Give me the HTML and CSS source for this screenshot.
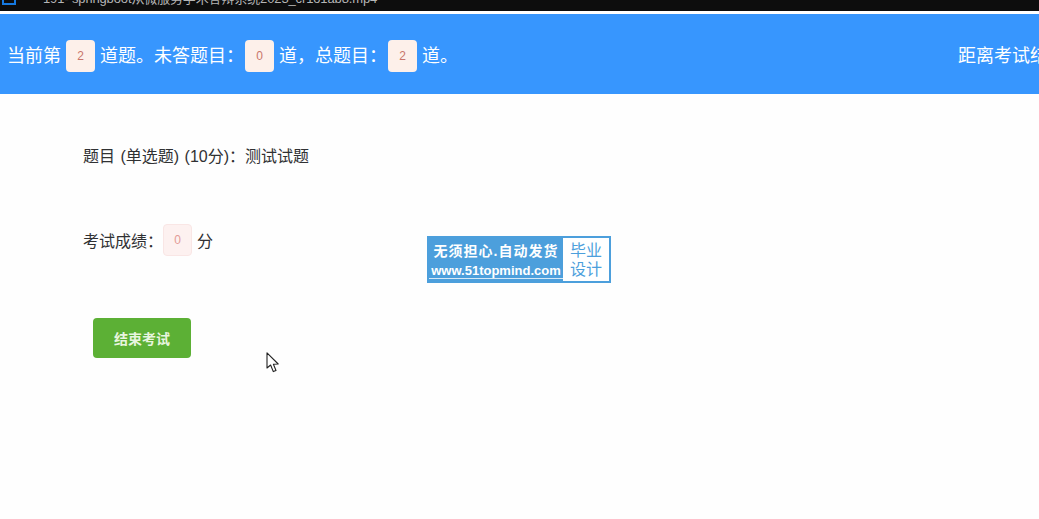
FILE: index.html
```html
<!DOCTYPE html>
<html lang="zh-CN">
<head>
  <meta charset="UTF-8" />
  <title>考试</title>
  <link rel="stylesheet" href="styles.css">
</head>
<body>
  <div class="player-bar">
    <span class="player-icon"></span>
    <span class="player-title">191- springboot从微服务学术答辩系统2023_cr1o1ab8.mp4</span>
  </div>

  <div class="exam-header">
    <div class="exam-count">
      当前第<span class="tag">2</span>道题。未答题目：<span class="tag tag-tight">0</span>道，总题目：<span class="tag tag-tight">2</span>道。
    </div>
    <div class="exam-timer">距离考试结束还有</div>
  </div>

  <div class="exam-body">
    <div class="question">题目 (单选题) (10分)：测试试题</div>
    <div class="score">考试成绩：<span class="tag tag-pale">0</span>分</div>
    <button class="finish-btn">结束考试</button>

    <div class="watermark">
      <div class="watermark-left">
        <div class="watermark-slogan">无须担心.自动发货</div>
        <div class="watermark-url">www.51topmind.com</div>
      </div>
      <div class="watermark-right">毕业<br>设计</div>
    </div>

    <svg class="mouse-cursor" width="14" height="21" viewBox="0 0 14 21">
      <path d="M1 0.8 L1 16 L4.6 13 L7.3 19.6 L10 18.5 L7.4 12.3 L12.2 12 Z" fill="#fff" stroke="#222" stroke-width="1.1" stroke-linejoin="round"/>
    </svg>
  </div>
</body>
</html>
```

FILE: styles.css
```css
/* pagina */
html, body {
  height: 100%;
}

body {
  margin: 0;
  background-color: #fefefe;
  color: #303133;
  font-family: "Liberation Sans", "Noto Sans CJK SC", sans-serif;
  overflow: hidden;
  display: flex;
  flex-direction: column;
}

/* barra do player no topo */
.player-bar {
  height: 11px;
  background-color: #0d0d0d;
  border-bottom: 3px solid #fff;
  position: relative;
  overflow: hidden;
  flex-shrink: 0;
}

.player-icon {
  position: absolute;
  left: 2px;
  top: -9px;
  width: 14px;
  height: 14px;
  border: 2px solid #1679e0;
  box-sizing: border-box;
}

.player-title {
  position: absolute;
  left: 43px;
  top: -9px;
  font-size: 13px;
  line-height: 16px;
  letter-spacing: -0.13px;
  color: #b5b5b5;
  white-space: nowrap;
}

/* cabecalho azul */
.exam-header {
  height: 80px;
  background-color: #3796fe;
  color: #fff;
  font-size: 18px;
  display: flex;
  align-items: center;
  justify-content: space-between;
  padding-left: 7px;
  flex-shrink: 0;
  white-space: nowrap;
  overflow: hidden;
}

.exam-count {
  display: flex;
  align-items: center;
}

.exam-timer {
  width: 81px;
  overflow: hidden;
}

.tag {
  display: inline-block;
  width: 29px;
  height: 32px;
  line-height: 32px;
  margin: 4px 5px 0;
  text-align: center;
  font-size: 12px;
  color: #c9766b;
  background-color: #fdf0ea;
  border-radius: 4px;
}

/* depois de dois pontos quase nao tem espaco */
.tag-tight {
  margin-left: 1px;
}

.tag-pale {
  margin: 0 5px 0 0;
  background-color: #fdf1f0;
  border: 1px solid #f9e6e5;
  box-sizing: border-box;
  line-height: 30px;
  color: #e39b96;
}

/* corpo */
.exam-body {
  position: relative;
  flex-grow: 1;
  padding: 53px 0 0 83px;
  font-size: 16px;
}

.question {
  line-height: 20px;
  word-spacing: 1px;
}

.score {
  margin-top: 57px;
  display: flex;
  align-items: center;
  height: 32px;
}

.finish-btn {
  display: block;
  width: 98px;
  height: 40px;
  margin: 62px 0 0 10px;
  background-color: #5cb035;
  color: #e8f5df;
  border: none;
  border-radius: 4px;
  font-family: inherit;
  font-size: 14px;
  font-weight: bold;
}

/* selo sobreposto ao video */
.watermark {
  position: absolute;
  left: 427px;
  top: 142px;
  width: 184px;
  height: 47px;
  display: flex;
  background-color: #4c9fdc;
  box-sizing: border-box;
  border: 2px solid #4c9fdc;
}

.watermark-left {
  flex-grow: 1;
  color: #fff;
  text-align: center;
  font-weight: bold;
}

.watermark-slogan {
  font-size: 14px;
  line-height: 26px;
  letter-spacing: 1px;
}

.watermark-url {
  font-size: 13px;
  line-height: 14px;
  border-bottom: 1px solid #d5e9f7;
}

.watermark-right {
  width: 46px;
  flex-shrink: 0;
  background-color: #fff;
  color: #4c9fdc;
  font-size: 16px;
  line-height: 19px;
  text-align: center;
  padding-top: 3px;
  box-sizing: border-box;
}

.mouse-cursor {
  position: absolute;
  left: 266px;
  top: 258px;
}
```
